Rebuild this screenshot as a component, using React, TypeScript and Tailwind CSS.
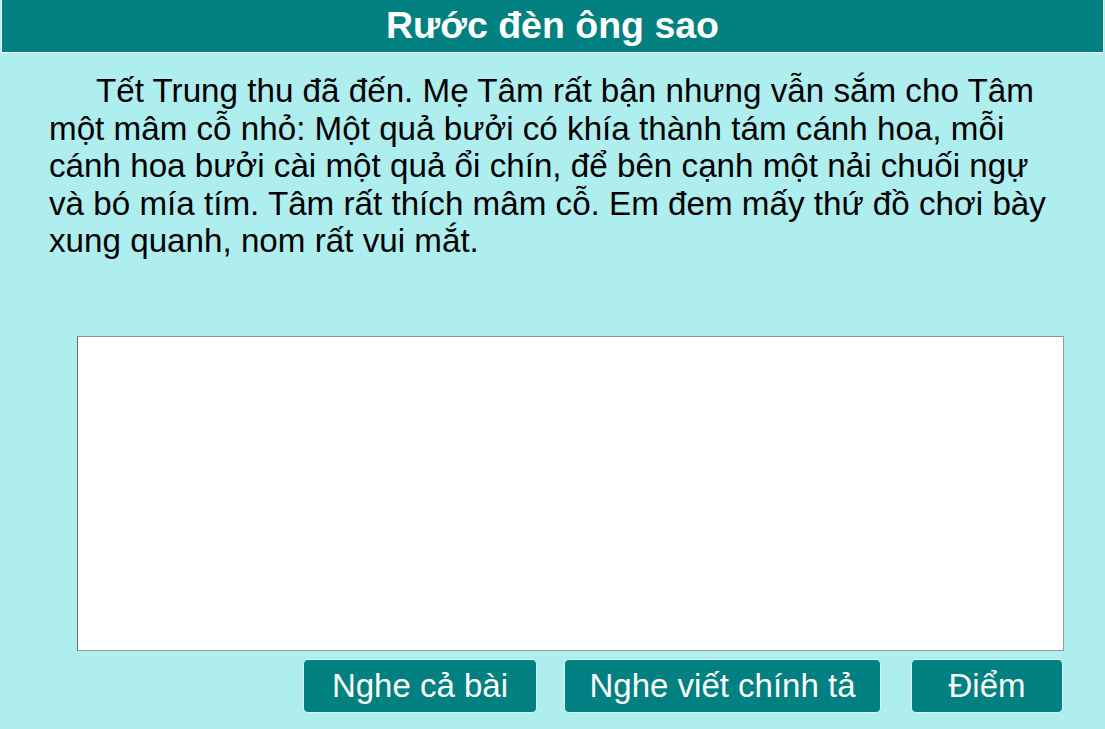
export default function App() {
  const font = { fontFamily: '"Liberation Sans", Arial, sans-serif' }
  return (
    <div className="w-[1105px] h-[729px] overflow-hidden bg-[#afeeee] flex flex-col" style={font}>
      <div className="mx-px h-[53px] shrink-0 border-x border-b border-white bg-[#008080] flex items-center justify-center">
        <h1 className="text-[37.5px] font-bold text-white leading-none">Rước đèn ông sao</h1>
      </div>

      <p className="mt-[19px] pl-[49px] pr-[45px] text-[33.2px] leading-[37.5px] text-black indent-[47px]">
        Tết Trung thu đã đến. Mẹ Tâm rất bận nhưng vẫn sắm cho Tâm một mâm cỗ nhỏ: Một quả bưởi có khía thành
        tám cánh hoa, mỗi cánh hoa bưởi cài một quả ổi chín, để bên cạnh một nải chuối ngự và bó mía tím. Tâm
        rất thích mâm cỗ. Em đem mấy thứ đồ chơi bày xung quanh, nom rất vui mắt.
      </p>

      <div className="mt-[76px] ml-[77px] w-[987px] h-[315px] shrink-0 bg-white border border-[#999999] border-l-[#707070] border-t-[#8f8f8f]" />

      <div className="mt-[8px] flex justify-end pr-[42px]">
        <button className="w-[234px] h-[54px] rounded-[5px] border border-[#d8f4f4] bg-[#008080] text-white text-[33px] leading-none">
          Nghe cả bài
        </button>
        <button className="ml-[27px] w-[317px] h-[54px] rounded-[5px] border border-[#d8f4f4] bg-[#008080] text-white text-[33px] leading-none">
          Nghe viết chính tả
        </button>
        <button className="ml-[30px] w-[152px] h-[54px] rounded-[5px] border border-[#d8f4f4] bg-[#008080] text-white text-[33px] leading-none">
          Điểm
        </button>
      </div>
    </div>
  )
}
